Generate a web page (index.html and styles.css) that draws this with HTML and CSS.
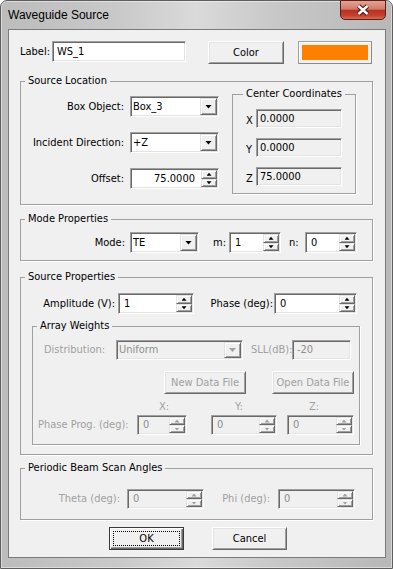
FILE: index.html
```html
<!DOCTYPE html>
<html lang="en">
<head>
  <meta charset="UTF-8" />
  <title>Waveguide Source</title>
  <link rel="stylesheet" href="styles.css">
</head>
<body>
  <div class="window">
    <div class="titlebar">
      <span class="title">Waveguide Source</span>
      <div class="close">
        <svg width="14" height="12" viewBox="0 0 14 12">
          <path d="M2.5 2 L11.5 10 M11.5 2 L2.5 10" stroke="#3b1511" stroke-width="4.4" />
          <path d="M2.5 2 L11.5 10 M11.5 2 L2.5 10" stroke="#fff" stroke-width="2.4" />
        </svg>
      </div>
    </div>

    <div class="client">
      <!-- label / colour -->
      <div class="top-row">
        <span class="lbl-name">Label:</span>
        <div class="field name-field">WS_1</div>
        <div class="btn color-btn">Color</div>
        <div class="swatch"><span></span></div>
      </div>

      <fieldset class="group g-loc">
        <legend>Source Location</legend>
        <div class="loc-body">
          <div class="loc-form">
            <div class="frow">
              <span class="flbl">Box Object:</span>
              <div class="field combo loc-ctl"><span class="val">Box_3</span><span class="drop"><i></i></span></div>
            </div>
            <div class="frow">
              <span class="flbl">Incident Direction:</span>
              <div class="field combo loc-ctl"><span class="val">+Z</span><span class="drop"><i></i></span></div>
            </div>
            <div class="frow">
              <span class="flbl">Offset:</span>
              <div class="field spin loc-ctl"><span class="val right">75.0000</span><span class="ud"><b><i class="up"></i></b><b><i class="dn"></i></b></span></div>
            </div>
          </div>

          <fieldset class="group g-coords">
            <legend>Center Coordinates</legend>
            <div class="crow"><span class="clbl">X</span><div class="field ro coord">0.0000</div></div>
            <div class="crow"><span class="clbl">Y</span><div class="field ro coord">0.0000</div></div>
            <div class="crow"><span class="clbl">Z</span><div class="field ro coord">75.0000</div></div>
          </fieldset>
        </div>
      </fieldset>

      <fieldset class="group g-mode">
        <legend>Mode Properties</legend>
        <div class="mode-row">
          <span class="mode-lbl">Mode:</span>
          <div class="field combo mode-combo"><span class="val">TE</span><span class="drop"><i></i></span></div>
          <span class="idx-lbl m-lbl">m:</span>
          <div class="field spin idx-spin"><span class="val">1</span><span class="ud"><b><i class="up"></i></b><b><i class="dn"></i></b></span></div>
          <span class="idx-lbl n-lbl">n:</span>
          <div class="field spin idx-spin"><span class="val">0</span><span class="ud"><b><i class="up"></i></b><b><i class="dn"></i></b></span></div>
        </div>
      </fieldset>

      <fieldset class="group g-src">
        <legend>Source Properties</legend>
        <div class="amp-row">
          <span class="amp-lbl">Amplitude (V):</span>
          <div class="field spin amp-spin"><span class="val">1</span><span class="ud"><b><i class="up"></i></b><b><i class="dn"></i></b></span></div>
          <span class="phase-lbl">Phase (deg):</span>
          <div class="field spin phase-spin"><span class="val">0</span><span class="ud"><b><i class="up"></i></b><b><i class="dn"></i></b></span></div>
        </div>

        <fieldset class="group g-array">
          <legend>Array Weights</legend>
          <div class="dist-row">
            <span class="dis dist-lbl">Distribution:</span>
            <div class="field combo dis-field dist-combo"><span class="val">Uniform</span><span class="drop"><i></i></span></div>
            <span class="dis sll-lbl">SLL(dB):</span>
            <div class="field dis-field sll-field">-20</div>
          </div>
          <div class="file-row">
            <div class="btn dis file-btn">New Data File</div>
            <div class="btn dis file-btn">Open Data File</div>
          </div>
          <div class="axis-row dis">
            <span class="ax-x">X:</span><span class="ax-y">Y:</span><span class="ax-z">Z:</span>
          </div>
          <div class="prog-row">
            <span class="dis prog-lbl">Phase Prog. (deg):</span>
            <div class="field spin dis-field px-spin"><span class="val">0</span><span class="ud"><b><i class="up"></i></b><b><i class="dn"></i></b></span></div>
            <div class="field spin dis-field py-spin"><span class="val">0</span><span class="ud"><b><i class="up"></i></b><b><i class="dn"></i></b></span></div>
            <div class="field spin dis-field pz-spin"><span class="val">0</span><span class="ud"><b><i class="up"></i></b><b><i class="dn"></i></b></span></div>
          </div>
        </fieldset>
      </fieldset>

      <fieldset class="group g-scan">
        <legend>Periodic Beam Scan Angles</legend>
        <div class="scan-row">
          <span class="dis theta-lbl">Theta (deg):</span>
          <div class="field spin dis-field scan-spin"><span class="val">0</span><span class="ud"><b><i class="up"></i></b><b><i class="dn"></i></b></span></div>
          <span class="dis phi-lbl">Phi (deg):</span>
          <div class="field spin dis-field scan-spin"><span class="val">0</span><span class="ud"><b><i class="up"></i></b><b><i class="dn"></i></b></span></div>
        </div>
      </fieldset>

      <div class="actions">
        <div class="btn default"><span>OK</span></div>
        <div class="btn">Cancel</div>
      </div>
    </div>
  </div>
</body>
</html>
```

FILE: styles.css
```css
* {
  box-sizing: border-box;
}

body {
  margin: 0;
  background: #fff;
  font-family: "DejaVu Sans Condensed", "Liberation Sans", sans-serif;
  font-size: 11px;
  color: #000;
  white-space: nowrap;
}

/* window frame */
.window {
  width: 393px;
  height: 569px;
  border: 1px solid #5e5e5e;
  border-radius: 7px 7px 0 0;
  padding: 0 6px 10px 7px;
  background: linear-gradient(90deg, #bcbcbc 0%, #c9c9c9 30%, #dadada 50%, #c8c8c8 70%, #b8b8b8 100%);
  box-shadow: inset 0 0 0 1px rgba(255, 255, 255, 0.45);
  display: flex;
  flex-direction: column;
}

.titlebar {
  height: 28px;
  display: flex;
  justify-content: space-between;
  align-items: flex-start;
}

.title {
  font-family: "Liberation Sans", sans-serif;
  font-size: 12px;
  margin-top: 7px;
}

.close {
  width: 46px;
  height: 20px;
  margin-top: -1px;
  border: 1px solid #5c1d15;
  border-radius: 0 0 5px 5px;
  background: linear-gradient(#e2a395 0%, #d27b68 45%, #b83222 52%, #c6402f 80%, #d96a52 100%);
  display: flex;
  align-items: center;
  justify-content: center;
}

.client {
  height: 529px;
  border: 1px solid #7a7a7a;
  background: #f0f0f0;
  padding: 11px 0 0 11px;
  display: flex;
  flex-direction: column;
  align-items: flex-start;
}

/* controls */
.field {
  height: 21px;
  line-height: 19px;
  padding: 0 0 0 4px;
  background: #fff;
  border: 1px solid;
  border-color: #a0a0a0 #fff #fff #a0a0a0;
  box-shadow: inset 1px 1px 0 #696969, inset -1px -1px 0 #e3e3e3;
}

.field.ro,
.field.dis-field {
  background: #f0f0f0;
}

.field.dis-field {
  color: #8e8e8e;
}

.combo,
.spin {
  display: flex;
  padding: 0;
}

.combo .val {
  flex: 1;
  padding-left: 2px;
}

.spin .val {
  flex: 1;
  padding-left: 5px;
}

.spin .val.right {
  text-align: right;
  padding-right: 6px;
}

.drop,
.ud b {
  background: #f0f0f0;
  border: 1px solid;
  border-color: #e3e3e3 #696969 #696969 #e3e3e3;
  box-shadow: inset 1px 1px 0 #fff, inset -1px -1px 0 #a0a0a0;
  display: flex;
  align-items: center;
  justify-content: center;
}

.drop {
  width: 17px;
  margin: 1px 1px 1px 0;
}

.drop i {
  width: 7px;
  height: 4px;
  background: #000;
  clip-path: polygon(0 0, 100% 0, 50% 100%);
}

.ud {
  width: 16px;
  margin: 1px 1px 1px 0;
  display: flex;
  flex-direction: column;
}

.ud b {
  flex: 1;
}

.ud i {
  width: 5px;
  height: 3px;
  background: #000;
}

.ud i.up {
  clip-path: polygon(50% 0, 100% 100%, 0 100%);
}

.ud i.dn {
  clip-path: polygon(0 0, 100% 0, 50% 100%);
}

.dis-field .drop i,
.dis-field .ud i {
  background: #a0a0a0;
}

.btn {
  height: 23px;
  width: 75px;
  background: #f0f0f0;
  border: 1px solid;
  border-color: #fff #696969 #696969 #fff;
  box-shadow: inset 1px 1px 0 #e3e3e3, inset -1px -1px 0 #a0a0a0;
  display: flex;
  align-items: center;
  justify-content: center;
}

.btn.default {
  border-color: #3a3a3a;
  box-shadow: inset 1px 1px 0 #fff, inset -1px -1px 0 #696969, inset -2px -2px 0 #a0a0a0;
}

.btn.default span {
  flex: 1;
  align-self: stretch;
  margin: 3px;
  border: 1px dotted #000;
  display: flex;
  align-items: center;
  justify-content: center;
}

.dis {
  color: #a0a0a0;
}

/* group boxes */
fieldset.group {
  margin: 0;
  padding: 0;
  min-width: 0;
  border: 1px solid #a0a0a0;
  box-shadow: 1px 1px 0 #fff;
}

fieldset.group legend {
  margin-left: 4px;
  padding: 0 3px;
  line-height: 14px;
}

/* top row */
.top-row {
  display: flex;
  align-items: flex-start;
  height: 23px;
}

.lbl-name {
  width: 32px;
  line-height: 21px;
}

.name-field {
  width: 134px;
}

.color-btn {
  width: 76px;
  margin-left: 22px;
}

.swatch {
  width: 74px;
  height: 23px;
  margin-left: 14px;
  padding: 3px;
  border: 1px solid;
  border-color: #a0a0a0 #8a8a8a #8a8a8a #a0a0a0;
  box-shadow: inset 1px 1px 0 #fff;
  display: flex;
}

.swatch span {
  flex: 1;
  background: #ff8000;
}

/* source location */
.g-loc {
  width: 353px;
  margin-top: 10px !important;
  padding-bottom: 10px !important;
}

.loc-body {
  display: flex;
  align-items: flex-start;
}

.loc-form {
  margin-top: 8px;
  display: flex;
  flex-direction: column;
  gap: 15px;
}

.frow {
  display: flex;
  height: 21px;
  line-height: 21px;
}

.flbl {
  width: 103px;
  margin-right: 6px;
  text-align: right;
}

.loc-ctl {
  width: 89px;
}

.g-coords {
  width: 124px;
  margin: -1px 0 0 13px !important;
  padding: 8px 0 7px 0 !important;
  display: flex;
  flex-direction: column;
  gap: 10px;
}

.g-coords legend {
  margin-left: 10px !important;
}

.crow {
  display: flex;
  align-items: flex-end;
  padding-left: 13px;
}

.clbl {
  width: 10px;
  line-height: 13px;
  margin-bottom: 1px;
}

.coord {
  width: 86px;
  height: 19px;
  line-height: 17px;
  padding-left: 3px;
}

/* mode */
.g-mode {
  width: 353px;
  margin-top: 7px !important;
  padding: 6px 0 7px 0 !important;
}

.mode-row {
  display: flex;
  line-height: 21px;
}

.mode-lbl {
  width: 104px;
  margin-right: 5px;
  text-align: right;
}

.mode-combo {
  width: 69px;
}

.idx-lbl {
  width: 16px;
}

.m-lbl {
  margin-left: 14px;
}

.n-lbl {
  margin-left: 8px;
}

.idx-spin {
  width: 52px;
}

/* source properties */
.g-src {
  width: 353px;
  margin-top: 9px !important;
  padding: 9px 0 9px 0 !important;
}

.amp-row {
  display: flex;
  line-height: 21px;
}

.amp-lbl {
  width: 94px;
  margin-right: 3px;
  text-align: right;
}

.amp-spin {
  width: 76px;
}

.phase-lbl {
  width: 66px;
  margin-left: 14px;
  text-align: right;
  padding-right: 1px;
}

.phase-spin {
  width: 83px;
}

.g-array {
  width: 328px;
  margin: 5px 0 0 11px !important;
  padding: 7px 0 9px 0 !important;
}

.dist-row {
  display: flex;
  padding-left: 11px;
  line-height: 20px;
}

.dist-row .field {
  height: 20px;
  line-height: 18px;
}

.dist-lbl {
  width: 72px;
}

.dist-combo {
  width: 127px;
}

.sll-lbl {
  width: 41px;
  margin-left: 8px;
}

.sll-field {
  width: 59px;
}

.file-row {
  display: flex;
  gap: 26px;
  margin-top: 11px;
  padding-left: 131px;
}

.file-btn {
  width: 82px;
  height: 23px;
}

.axis-row {
  display: flex;
  margin-top: 6px;
  padding-left: 126px;
  line-height: 13px;
}

.ax-x {
  width: 76px;
}

.ax-y {
  width: 74px;
}

.prog-row {
  display: flex;
  margin-top: 2px;
  padding-left: 5px;
  line-height: 20px;
}

.prog-row .field {
  height: 20px;
  line-height: 18px;
}

.prog-lbl {
  width: 99px;
}

.px-spin {
  width: 50px;
}

.py-spin {
  width: 66px;
  margin-left: 24px;
}

.pz-spin {
  width: 67px;
  margin-left: 10px;
}

/* periodic scan */
.g-scan {
  width: 353px;
  margin-top: 6px !important;
  padding: 14px 0 10px 0 !important;
}

.scan-row {
  display: flex;
  line-height: 20px;
}

.scan-row .field {
  height: 20px;
  line-height: 18px;
}

.theta-lbl {
  width: 99px;
  margin-right: 7px;
  text-align: right;
}

.scan-spin {
  width: 77px;
}

.phi-lbl {
  width: 51px;
  margin: 0 8px 0 15px;
  text-align: right;
}

/* ok / cancel */
.actions {
  display: flex;
  gap: 28px;
  margin-top: 7px;
  padding-left: 89px;
}
```
